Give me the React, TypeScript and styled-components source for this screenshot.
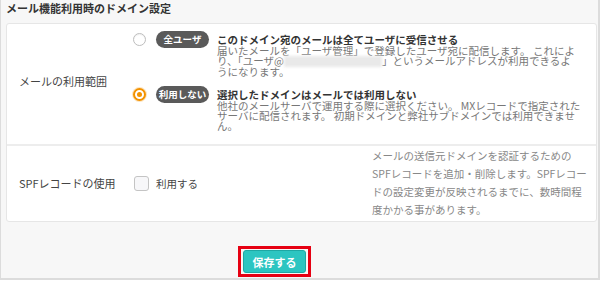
import React from 'react';
import styled, { createGlobalStyle } from 'styled-components';

const GlobalStyle = createGlobalStyle`
  html, body {
    margin: 0;
    padding: 0;
    background: #ffffff;
  }
  body {
    font-family: "Noto Sans CJK JP", "Noto Sans", sans-serif;
    color: #444;
  }
`;

const Frame = styled.div`
  box-sizing: border-box;
  width: 600px;
  height: 280px;
  background: #f7f7f7;
  border-left: 1px solid #dcdcdc;
  border-right: 2px solid #dcdcdc;
  border-bottom: 2px solid #dcdcdc;
  display: flex;
  flex-direction: column;
`;

const Title = styled.h2`
  margin: 0;
  padding: 1px 0 0 5px;
  height: 23px;
  box-sizing: border-box;
  font-size: 11px;
  line-height: 14px;
  font-weight: 600;
  color: #333;
`;

const Card = styled.div`
  margin: 0 1px 0 5px;
  background: #fff;
  border: 1px solid #e6e6e6;
  border-radius: 3px;
`;

const Row = styled.div<{ $divider?: boolean; $pad: string }>`
  display: grid;
  grid-template-columns: 126px 1fr;
  align-items: center;
  padding: ${(p) => p.$pad};
  border-bottom: ${(p) => (p.$divider ? '2px solid #ededed' : 'none')};
`;

const Label = styled.div`
  padding-left: 12px;
  font-size: 11px;
  line-height: 14px;
  color: #444;
`;

const Options = styled.div`
  display: flex;
  flex-direction: column;
  gap: 8px;
`;

const Option = styled.div`
  display: flex;
  align-items: flex-start;
`;

const Radio = styled.span<{ $checked?: boolean }>`
  box-sizing: border-box;
  flex: none;
  width: 13px;
  height: 13px;
  margin-top: 2px;
  border-radius: 50%;
  background: #fff;
  position: relative;
  border: ${(p) => (p.$checked ? '2px solid #f39200' : '1px solid #bdbdbd')};
  box-shadow: ${(p) => (p.$checked ? '0 0 0 1px rgba(243, 146, 0, 0.25)' : 'inset 0 1px 1px rgba(0,0,0,0.06)')};

  &::after {
    content: '';
    display: ${(p) => (p.$checked ? 'block' : 'none')};
    position: absolute;
    left: 2px;
    top: 2px;
    width: 5px;
    height: 5px;
    border-radius: 50%;
    background: #f39200;
  }
`;

const Badge = styled.span`
  flex: none;
  width: 53px;
  height: 17px;
  margin-left: 10px;
  border-radius: 9px;
  background: #5a5a5a;
  color: #fff;
  font-size: 9.5px;
  font-weight: 700;
  line-height: 17px;
  text-align: center;
`;

const OptionText = styled.div`
  margin-left: 8px;
  padding-top: 3px;
  font-size: 10.5px;
  white-space: nowrap;
`;

const OptionHeading = styled.div`
  font-weight: 700;
  color: #333;
  line-height: 12px;
`;

const OptionDesc = styled.div`
  color: #777;
  line-height: 10.3px;
`;

const Masked = styled.span`
  display: inline-block;
  width: 98px;
  height: 11px;
  vertical-align: -2px;
  background: #e9e9e9;
  filter: blur(1.5px);
`;

const SpfBody = styled.div`
  display: grid;
  grid-template-columns: 239px 1fr;
  align-items: center;
`;

const CheckLabel = styled.label`
  display: flex;
  align-items: center;
  gap: 7px;
  padding-left: 1px;
  font-size: 10.5px;
  color: #444;
`;

const CheckBox = styled.span`
  box-sizing: border-box;
  width: 15px;
  height: 15px;
  border: 1.5px solid #c4c4c4;
  border-radius: 3px;
  background: #f7f7f9;
`;

const Note = styled.p`
  margin: 0;
  font-size: 10.5px;
  line-height: 18px;
  color: #888;
  white-space: nowrap;
`;

const Footer = styled.div`
  padding: 24px 0 0 237px;
`;

const Highlight = styled.span`
  display: inline-block;
  border: 3px solid #e60012;
  padding: 1px 2px;
`;

const SaveButton = styled.button`
  display: block;
  box-sizing: border-box;
  width: 63px;
  height: 23px;
  padding: 0;
  border: 1px solid #1ea7a3;
  border-radius: 3px;
  background: #2cc5c1;
  color: #fff;
  font-family: "Noto Sans CJK JP", sans-serif;
  font-size: 11px;
  font-weight: 700;
  cursor: pointer;
`;

const App = () => {
  return (
    <>
      <GlobalStyle />
      <Frame>
        <Title>メール機能利用時のドメイン設定</Title>
        <Card>
          <Row $divider $pad="7px 0 13px">
            <Label>メールの利用範囲</Label>
            <Options>
              <Option>
                <Radio />
                <Badge>全ユーザ</Badge>
                <OptionText>
                  <OptionHeading>このドメイン宛のメールは全てユーザに受信させる</OptionHeading>
                  <OptionDesc>
                    届いたメールを「ユーザ管理」で登録したユーザ宛に配信します。 これによ
                    <br />
                    り、「ユーザ@<Masked />」というメールアドレスが利用できるよ
                    <br />
                    うになります。
                  </OptionDesc>
                </OptionText>
              </Option>
              <Option>
                <Radio $checked />
                <Badge>利用しない</Badge>
                <OptionText>
                  <OptionHeading>選択したドメインはメールでは利用しない</OptionHeading>
                  <OptionDesc>
                    他社のメールサーバで運用する際に選択ください。 MXレコードで指定された
                    <br />
                    サーバに配信されます。 初期ドメインと弊社サブドメインでは利用できませ
                    <br />
                    ん。
                  </OptionDesc>
                </OptionText>
              </Option>
            </Options>
          </Row>
          <Row $pad="1px 0 2px">
            <Label>SPFレコードの使用</Label>
            <SpfBody>
              <CheckLabel>
                <CheckBox />
                利用する
              </CheckLabel>
              <Note>
                メールの送信元ドメインを認証するための
                <br />
                SPFレコードを追加・削除します。SPFレコー
                <br />
                ドの設定変更が反映されるまでに、数時間程
                <br />
                度かかる事があります。
              </Note>
            </SpfBody>
          </Row>
        </Card>
        <Footer>
          <Highlight>
            <SaveButton>保存する</SaveButton>
          </Highlight>
        </Footer>
      </Frame>
    </>
  );
};

export default App;
